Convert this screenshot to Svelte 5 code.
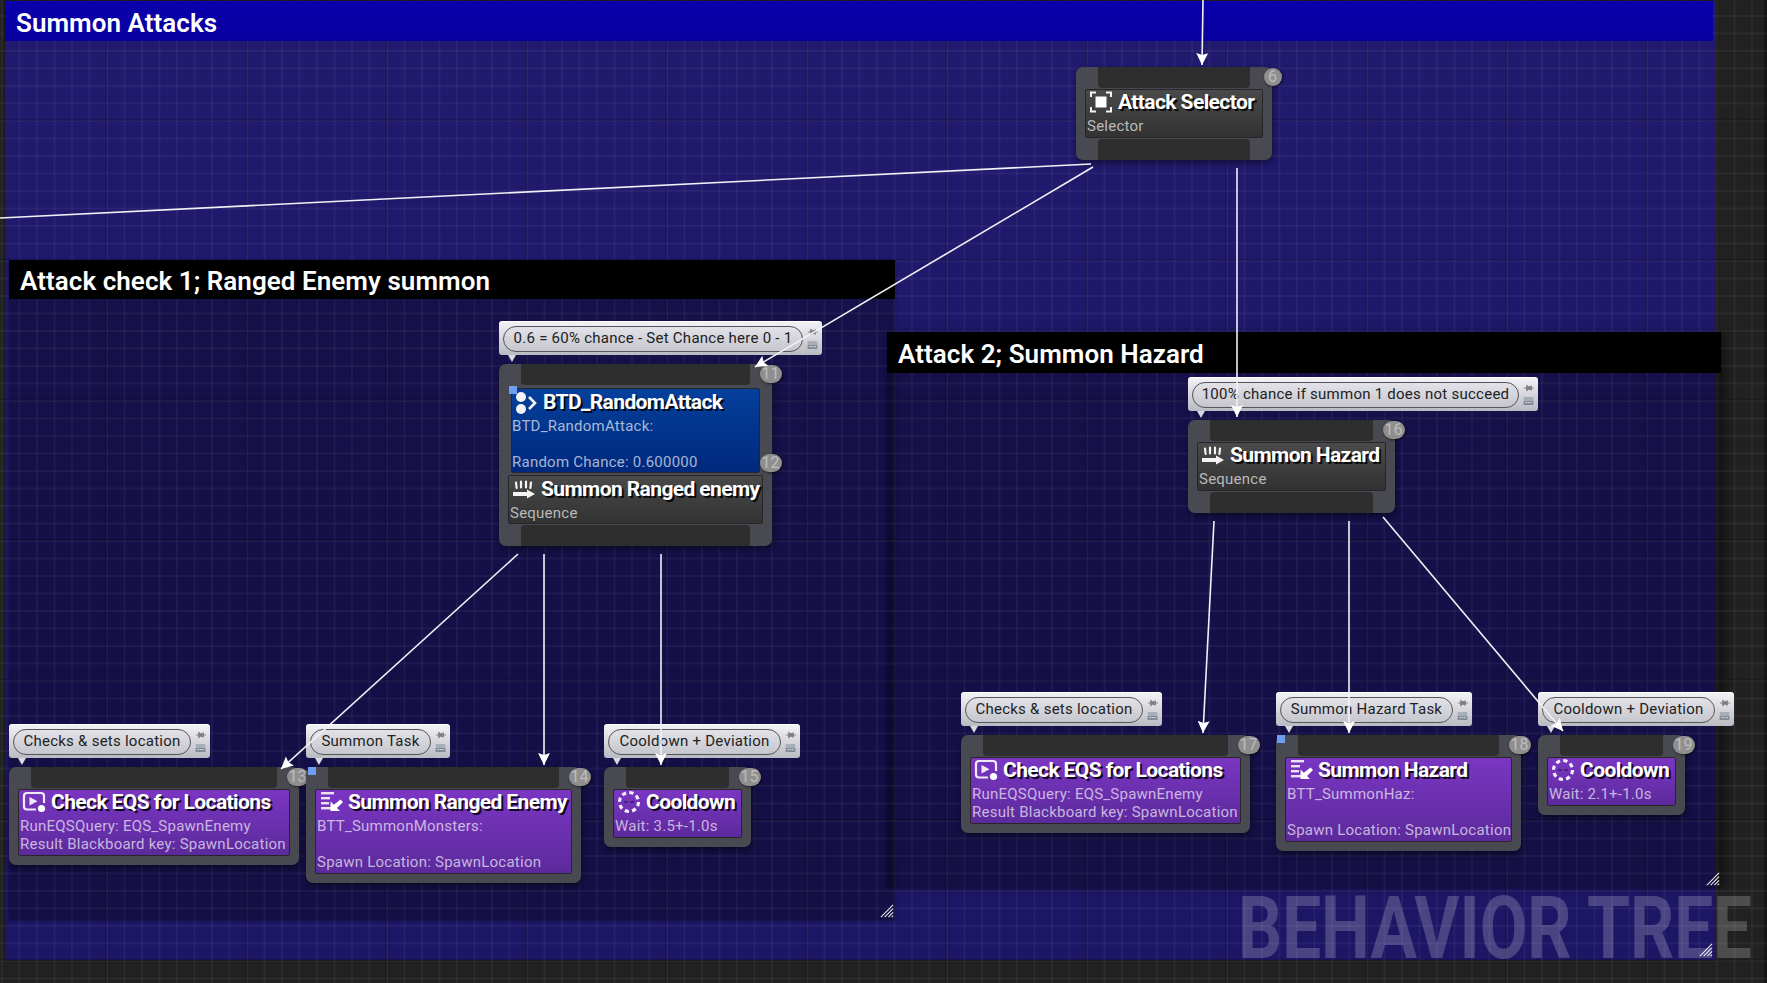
<script>
  const nodes = [
    { x: 1076, y: 67, w: 196, badges: [{ n: 6, y: 10 }], bottom: true, boxes: [
      { kind: 'dark', icon: 'selector', title: 'Attack Selector', lines: ['Selector'] } ] },
    { x: 499, y: 364, w: 273, badges: [{ n: 11, y: 10 }, { n: 12, y: 99 }], bottom: true, sq: [10, 22], boxes: [
      { kind: 'blue', inset: 12, icon: 'random', title: 'BTD_RandomAttack', lines: ['BTD_RandomAttack:', '', 'Random Chance: 0.600000'] },
      { kind: 'dark', icon: 'sequence', title: 'Summon Ranged enemy', lines: ['Sequence'] } ] },
    { x: 1188, y: 420, w: 207, badges: [{ n: 16, y: 10 }], bottom: true, boxes: [
      { kind: 'dark', icon: 'sequence', title: 'Summon Hazard', lines: ['Sequence'] } ] },
    { x: 9, y: 767, w: 290, badges: [{ n: 13, y: 10 }], boxes: [
      { kind: 'task', icon: 'eqs', title: 'Check EQS for Locations', lines: ['RunEQSQuery: EQS_SpawnEnemy', 'Result Blackboard key: SpawnLocation'] } ] },
    { x: 306, y: 767, w: 275, badges: [{ n: 14, y: 10 }], sq: [2, 0], boxes: [
      { kind: 'task', icon: 'task', title: 'Summon Ranged Enemy', lines: ['BTT_SummonMonsters:', '', 'Spawn Location: SpawnLocation'] } ] },
    { x: 604, y: 767, w: 147, badges: [{ n: 15, y: 10 }], boxes: [
      { kind: 'task', icon: 'wait', title: 'Cooldown', lines: ['Wait: 3.5+-1.0s'] } ] },
    { x: 961, y: 735, w: 289, badges: [{ n: 17, y: 10 }], boxes: [
      { kind: 'task', icon: 'eqs', title: 'Check EQS for Locations', lines: ['RunEQSQuery: EQS_SpawnEnemy', 'Result Blackboard key: SpawnLocation'] } ] },
    { x: 1276, y: 735, w: 245, badges: [{ n: 18, y: 10 }], sq: [1, 0], boxes: [
      { kind: 'task', icon: 'task', title: 'Summon Hazard', lines: ['BTT_SummonHaz:', '', 'Spawn Location: SpawnLocation'] } ] },
    { x: 1538, y: 735, w: 147, badges: [{ n: 19, y: 10 }], boxes: [
      { kind: 'task', icon: 'wait', title: 'Cooldown', lines: ['Wait: 2.1+-1.0s'] } ] }
  ];

  const bubbles = [
    { x: 499, y: 321, w: 323, text: '0.6 = 60% chance - Set Chance here 0 - 1' },
    { x: 1188, y: 377, w: 350, text: '100% chance if summon 1 does not succeed' },
    { x: 9, y: 724, w: 201, text: 'Checks & sets location' },
    { x: 306, y: 724, w: 144, text: 'Summon Task' },
    { x: 604, y: 724, w: 196, text: 'Cooldown + Deviation' },
    { x: 961, y: 692, w: 201, text: 'Checks & sets location' },
    { x: 1276, y: 692, w: 196, text: 'Summon Hazard Task' },
    { x: 1538, y: 692, w: 196, text: 'Cooldown + Deviation' }
  ];

  const wires = [
    { a: [1203, 0], b: [1202, 65], arrow: true },
    { a: [0, 218], b: [1091, 164] },
    { a: [1093, 167], b: [755, 367], arrow: true },
    { a: [1237, 168], b: [1237, 417], arrow: true },
    { a: [518, 554], b: [281, 769], arrow: true },
    { a: [544, 554], b: [544, 765], arrow: true },
    { a: [661, 554], b: [661, 765], arrow: true },
    { a: [1214, 521], b: [1203, 733], arrow: true },
    { a: [1349, 521], b: [1349, 733], arrow: true },
    { a: [1383, 517], b: [1563, 731], arrow: true }
  ];

  const comments = [
    { id: 'outer', title: 'Summon Attacks' },
    { id: 'one', title: 'Attack check 1; Ranged Enemy summon' },
    { id: 'two', title: 'Attack 2; Summon Hazard' }
  ];
</script>

{#snippet icon(name)}
  <svg class="icon" viewBox="0 0 24 24" aria-hidden="true">
    {#if name === 'selector'}
      <g fill="none" stroke="#f2f2f2" stroke-width="2">
        <path d="M2 7V2.5H7M17 2.5H22V7M22 17V21.5H17M7 21.5H2V17" />
      </g>
      <rect x="6.5" y="6.5" width="11" height="11" fill="#fff" />
    {:else if name === 'sequence'}
      <g fill="none" stroke="#f4f4f4" stroke-width="2.2" stroke-linecap="round">
        <path d="M4 5.5 4.6 11M9 4.5V10.5M14 4.5V10.5M19 5.5 18.4 11" />
      </g>
      <path d="M1 15H15V12.5L23 17L15 21.5V19H1Z" fill="#f4f4f4" />
    {:else if name === 'random'}
      <circle cx="8" cy="7" r="5" fill="#f4f4f4" />
      <circle cx="8" cy="19" r="5" fill="#f4f4f4" />
      <path d="M16 7 22 13 16 19" fill="none" stroke="#f4f4f4" stroke-width="2.6" />
    {:else if name === 'eqs'}
      <path d="M14 19.5H5Q2 19.5 2 16.5V6Q2 3 5 3H19Q22 3 22 6V13" fill="none" stroke="#f2ecfa" stroke-width="2.2" />
      <path d="M7.5 7V15.5L15.5 11.2Z" fill="#f2ecfa" />
      <circle cx="19.5" cy="18.5" r="3.6" fill="#fff" />
    {:else if name === 'task'}
      <g fill="#ece4f6">
        <rect x="2" y="2" width="13" height="2.4" />
        <rect x="2" y="7" width="9" height="2.4" />
        <rect x="2" y="12" width="8" height="2.4" />
        <rect x="2" y="17" width="11" height="2.4" />
      </g>
      <path d="M22.5 8.5 25 11 19 17 22 20H12.5V10.5L15.8 13.8Z" fill="#fff" transform="translate(-1 1)" />
    {:else}
      <circle cx="12" cy="12" r="9.5" fill="none" stroke="#f4eefb" stroke-width="3.2" stroke-dasharray="4.2 3.26" />
      <path d="M7 12H11M13 12H17" stroke="#1d0f4a" stroke-width="1.2" />
    {/if}
  </svg>
{/snippet}

<div class="canvas">
  {#each comments as c}
    <section class="comment {c.id}">
      <h2 class="bar">{c.title}</h2>
      <svg class="grip" viewBox="0 0 15 15" aria-hidden="true">
        <path d="M1 14 14 1M5 14 14 5M9 14 14 9M12.5 14 14 12.5" stroke="#eee" stroke-width="1.1" fill="none" />
      </svg>
    </section>
  {/each}

  <div class="grid"></div>

  {#each nodes as n}
    <div class="node" style="left:{n.x}px;top:{n.y}px;width:{n.w}px">
      <div class="port"></div>
      {#each n.boxes as b}
        <div class="box {b.kind}" style="margin-inline:{b.inset ?? 9}px">
          <div class="head">
            {@render icon(b.icon)}
            <span class="title">{b.title}</span>
          </div>
          {#each b.lines as line}
            <div class="line">{line}</div>
          {/each}
        </div>
      {/each}
      {#if n.bottom}
        <div class="port low"></div>
      {:else}
        <div class="foot"></div>
      {/if}
      {#each n.badges as badge}
        <span class="badge" style="top:{badge.y - 9}px">{badge.n}</span>
      {/each}
      {#if n.sq}
        <span class="mark" style="left:{n.sq[0]}px;top:{n.sq[1]}px"></span>
      {/if}
    </div>
  {/each}

  {#each bubbles as b}
    <div class="bubble" style="left:{b.x}px;top:{b.y}px;width:{b.w}px">
      <div class="pill">{b.text}</div>
      <div class="tools">
        <svg viewBox="0 0 12 8" class="pin" aria-hidden="true">
          <path d="M1 4H4M4 1V7L6 5.5H9V2.5H6L4 1ZM9 1V7M10 4H12" fill="#7d7d86" stroke="#7d7d86" stroke-width="1" />
        </svg>
        <svg viewBox="0 0 12 10" class="note" aria-hidden="true">
          <rect width="12" height="10" fill="#a7aeb8" />
          <rect y="5" width="12" height="5" fill="#7f8a96" />
          <path d="M2 7H4M5 7H7M8 7H10" stroke="#e8e8e8" stroke-width="1.2" />
        </svg>
      </div>
    </div>
  {/each}

  <svg class="wires" viewBox="0 0 1767 983" aria-hidden="true">
    <defs>
      <marker id="head" markerUnits="userSpaceOnUse" markerWidth="13" markerHeight="13" refX="12" refY="6" orient="auto">
        <path d="M0 0 12 6 0 12 2 6Z" fill="#fff" />
      </marker>
    </defs>
    {#each wires as w}
      <line x1={w.a[0]} y1={w.a[1]} x2={w.b[0]} y2={w.b[1]} marker-end={w.arrow ? 'url(#head)' : undefined} />
    {/each}
  </svg>

  <div class="stamp">BEHAVIOR TREE</div>
</div>

<style>
  :global(body) { margin: 0; background: #212121; }

  .canvas {
    position: relative;
    width: 1767px;
    height: 983px;
    overflow: hidden;
    background: #212121;
    font-family: Roboto, "Liberation Sans", sans-serif;
    box-shadow: inset -3px 0 0 #161616;
  }

  .grid {
    position: absolute;
    inset: 0;
    z-index: 2;
    pointer-events: none;
    background-image:
      linear-gradient(to right, rgba(0, 0, 0, .32) 1.5px, transparent 1.5px),
      linear-gradient(to bottom, rgba(0, 0, 0, .32) 1.5px, transparent 1.5px),
      linear-gradient(to right, rgba(255, 255, 255, .042) 1.5px, transparent 1.5px),
      linear-gradient(to bottom, rgba(255, 255, 255, .042) 1.5px, transparent 1.5px);
    background-size: 140px 140px, 140px 140px, 17.5px 17.5px, 17.5px 17.5px;
    background-position: 105.5px 0, 0 119.5px, 1px 0, 0 15px;
  }

  .comment { position: absolute; }
  .comment.outer {
    left: 5px; top: 1px; width: 1711px; height: 959px;
    background: linear-gradient(#211a6e, #1d1664);
    box-shadow: 0 0 3px rgba(0, 0, 0, .5);
  }
  .comment.one {
    left: 9px; top: 260px; width: 886px; height: 659px;
    background: rgba(0, 0, 0, .31);
    box-shadow: 0 1px 3px rgba(0, 0, 0, .5);
  }
  .comment.two {
    left: 887px; top: 332px; width: 834px; height: 555px;
    background: rgba(0, 0, 0, .31);
    box-shadow: 0 1px 3px rgba(0, 0, 0, .4), 6px 0 10px rgba(0, 0, 0, .35);
  }

  .bar {
    position: relative;
    z-index: 3;
    box-sizing: border-box;
    margin: 0;
    height: 39px;
    padding-left: 11px;
    background: #000;
    color: #fff;
    font: 600 26px/43px Roboto, sans-serif;
    letter-spacing: .05px;
  }
  .outer .bar {
    height: 40px;
    width: 1708px;
    background: linear-gradient(#0a00ae, #08009e);
    line-height: 45px;
  }
  .two .bar { height: 41px; line-height: 45px; }

  .grip {
    position: absolute;
    right: 1px;
    bottom: 1px;
    width: 14px;
    height: 14px;
    z-index: 3;
  }
  .outer .grip { right: 3px; bottom: 3px; }

  .node {
    position: absolute;
    z-index: 4;
    display: flex;
    flex-direction: column;
    gap: 1px;
    box-sizing: border-box;
    border-radius: 7px;
    background: #494951;
    box-shadow: 1px 3px 6px rgba(0, 0, 0, .45);
  }
  .port {
    height: 21px;
    margin: 0 22px;
    border-radius: 0 0 4px 4px;
    background: #2e2e2e;
  }
  .port.low { border-radius: 4px 4px 0 0; }
  .foot { height: 8px; }

  .box {
    box-sizing: border-box;
    padding: 0 2px 2px 1px;
    border: 1px solid #26262a;
    border-radius: 2px;
  }
  .box.dark { background: linear-gradient(#4a4a4a, #323232); }
  .box.blue {
    margin-top: 2px;
    margin-bottom: 1px;
    padding: 0 2px 1px 0;
    background: linear-gradient(#05409c, #00287c);
  }
  .box.task { background: linear-gradient(#7a36c2, #5c2a9c); }

  .head {
    display: flex;
    align-items: center;
    gap: 5px;
    height: 27px;
    padding: 0 0 3px 2px;
    box-sizing: border-box;
  }
  .blue .head { height: 28px; gap: 6px; padding-left: 1px; }
  .blue + .dark { padding-bottom: 1px; }
  .blue + .dark .head { height: 28px; }
  .icon { flex: none; width: 24px; height: 24px; }
  .title {
    color: #fff;
    font-size: 21px;
    font-weight: 700;
    letter-spacing: -.6px;
    white-space: nowrap;
    text-shadow: 2px 2px 0 rgba(0, 0, 0, .85);
  }
  .line {
    height: 18px;
    color: rgba(255, 255, 255, .66);
    font-size: 15px;
    letter-spacing: .24px;
    line-height: 18px;
    white-space: nowrap;
  }

  .badge {
    position: absolute;
    right: -9.5px;
    box-sizing: border-box;
    min-width: 18px;
    height: 18px;
    padding: 0 2px;
    border-radius: 9px;
    background: #8f8f8f;
    box-shadow: 1px 1px 3px rgba(0, 0, 0, .6);
    color: #bcbcbc;
    font-size: 16px;
    line-height: 18px;
    text-align: center;
  }
  .mark {
    position: absolute;
    width: 8px;
    height: 8px;
    background: #6e9ef2;
  }

  .bubble {
    position: absolute;
    z-index: 5;
    display: flex;
    align-items: center;
    box-sizing: border-box;
    height: 34px;
    padding: 0 3px 0 4px;
    gap: 2px;
    border-radius: 3px;
    background: linear-gradient(#f2f2f6, #babac2);
    border-top: 1px solid #fff;
  }
  .bubble::after {
    content: "";
    position: absolute;
    left: 9px;
    top: 100%;
    border: 4px solid transparent;
    border-top: 7px solid #d8d8de;
    border-bottom: 0;
  }
  .pill {
    flex: 1;
    min-width: 0;
    box-sizing: border-box;
    height: 26px;
    border: 1px solid #555;
    border-radius: 13px;
    background: linear-gradient(#e2e2e8, #c6c6ce);
    color: #222;
    font-size: 15px;
    letter-spacing: .25px;
    line-height: 22px;
    text-align: center;
    white-space: nowrap;
  }
  .tools {
    flex: none;
    display: flex;
    flex-direction: column;
    align-items: center;
    gap: 5px;
    width: 14px;
  }
  .pin { width: 11px; height: 8px; }
  .note { width: 11px; height: 8px; }

  .wires {
    position: absolute;
    inset: 0;
    z-index: 6;
    width: 1767px;
    height: 983px;
    pointer-events: none;
  }
  .wires line { stroke: #f1f1f6; stroke-width: 1.6; }

  .stamp {
    position: absolute;
    z-index: 3;
    left: 1238px;
    top: 885px;
    color: rgba(255, 255, 255, .2);
    font-size: 87px;
    font-weight: 700;
    line-height: 87px;
    white-space: nowrap;
    transform: scaleX(.795);
    transform-origin: 0 0;
  }
</style>
